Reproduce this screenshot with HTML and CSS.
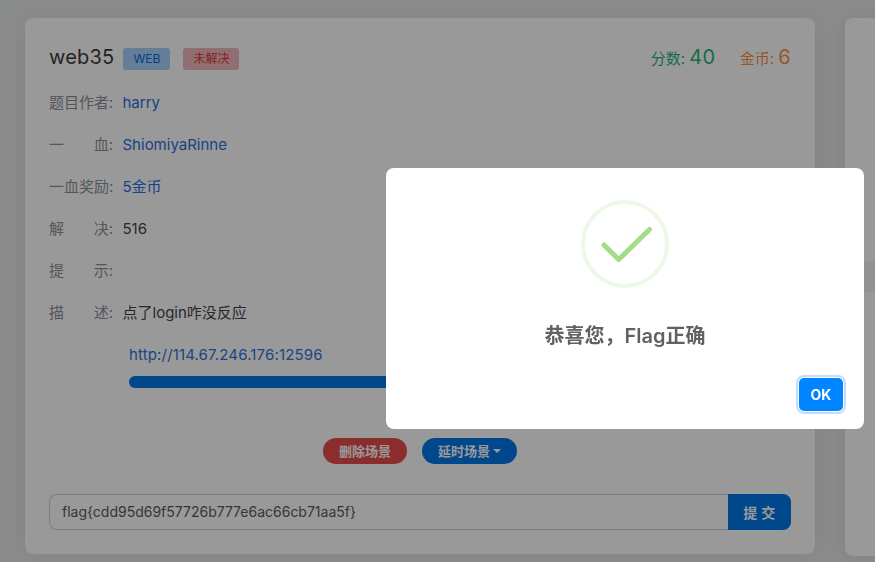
FILE: index.html
```html
<!DOCTYPE html>
<html lang="zh">
<head>
<meta charset="utf-8">
<title>web35</title>
<link rel="stylesheet" href="styles.css">
</head>
<body>
<main class="page">
  <section class="card">
    <header class="head">
      <h1 class="title">web35</h1>
      <span class="tag tag-blue">WEB</span>
      <span class="tag tag-red">未解决</span>
      <div class="stats">
        <span class="stat stat-green">分数: <b>40</b></span>
        <span class="stat stat-orange">金币: <b>6</b></span>
      </div>
    </header>
    <div class="row"><div class="label"><span>题目作者:</span></div><a class="val link">harry</a></div>
    <div class="row"><div class="label"><span>一</span><span>血:</span></div><a class="val link">ShiomiyaRinne</a></div>
    <div class="row"><div class="label"><span>一血奖励:</span></div><a class="val link">5金币</a></div>
    <div class="row"><div class="label"><span>解</span><span>决:</span></div><span class="val">516</span></div>
    <div class="row"><div class="label"><span>提</span><span>示:</span></div><span class="val"></span></div>
    <div class="row"><div class="label"><span>描</span><span>述:</span></div><span class="val">点了login咋没反应</span></div>
    <div class="scene">
      <a class="scene-url">http://114.67.246.176:12596</a>
      <div class="bar"></div>
    </div>
    <div class="actions">
      <button class="pill pill-red">删除场景</button>
      <button class="pill pill-blue">延时场景<i class="caret"></i></button>
    </div>
    <form class="flag">
      <div class="flag-input">flag{cdd95d69f57726b777e6ac66cb71aa5f}</div>
      <button class="flag-btn" type="button">提 交</button>
    </form>
  </section>
  <section class="card card-next"></section>
</main>
<div class="overlay"></div>
<div class="band"></div>
<div class="modal">
  <svg class="check" width="88" height="88" viewBox="0 0 88 88">
    <circle cx="44" cy="44" r="42" fill="none" stroke="#a5dc86" stroke-opacity=".2" stroke-width="4"/>
    <path d="M23 45 L37.700 59.500 L68.500 29.500" fill="none" stroke="#a5dc86" stroke-width="5" stroke-linecap="round" stroke-linejoin="round"/>
  </svg>
  <h2 class="modal-title">恭喜您，Flag正确</h2>
  <div class="modal-foot"><button class="ok">OK</button></div>
</div>
</body>
</html>
```
FILE: styles.css
```css
* { box-sizing: border-box; }
html, body { margin: 0; height: 100%; overflow: hidden; }
body {
  background: #e5e7e6;
  font-family: Inter, "Noto Sans CJK SC", sans-serif;
  font-size: 15px;
  color: #2f3133;
}
.page {
  display: flex;
  gap: 30px;
  padding: 18px 0 0 25px;
  width: 1200px;
  height: 562px;
  align-items: flex-start;
}
.card {
  width: 790px;
  height: 536px;
  flex: none;
  background: #fff;
  border-radius: 8px;
  box-shadow: 0 0 24px rgba(0, 0, 0, .05);
  padding: 26px 24px 0;
}
.card-next { width: 340px; height: 538px; }
.head { display: flex; align-items: flex-start; height: 38px; }
.title { margin: 0; font-size: 20px; letter-spacing: .2px; font-weight: 400; line-height: 26px; color: #3c3c3c; }
.tag {
  height: 22px;
  margin-top: 4px;
  border-radius: 3px;
  font-size: 12px;
  line-height: 22px;
  text-align: center;
}
.tag-blue { width: 47px; margin-left: 9px; background: #a8d0fa; color: #0e6ae0; }
.tag-red { width: 56px; margin-left: 13px; background: #f0b8bc; color: #e03a3a; }
.stats { margin-left: auto; display: flex; gap: 24px; line-height: 26px; font-size: 15px; }
.stat b { font-size: 20px; font-weight: 400; letter-spacing: .4px; }
.stat-green { color: #29b27a; }
.stat-orange { color: #fb9240; }
.row { display: flex; height: 42px; line-height: 42px; }
.label { width: 64px; display: flex; justify-content: space-between; color: #8a9199; flex: none; white-space: nowrap; }
.val { margin-left: 9.500px; color: #3f454b; }
.val.link { color: #2a70e0; }
.scene { padding-left: 80px; margin-top: 10px; }
.scene-url { display: block; line-height: 22px; color: #2f74e0; letter-spacing: .15px; }
.bar { height: 12px; margin-top: 10px; background: #0078e8; border-radius: 6px; width: 640px; }
.actions { display: flex; justify-content: center; gap: 15px; margin-top: 50px; }
.pill {
  height: 26px;
  border: 0;
  border-radius: 13px;
  color: #fff;
  font: 700 13px/26px Inter, "Noto Sans CJK SC", sans-serif;
  padding: 0;
  display: flex;
  align-items: center;
  justify-content: center;
}
.pill-red { width: 84px; background: #e84c4c; }
.pill-blue { width: 95px; background: #0078e8; }
.caret {
  width: 0; height: 0; margin-left: 3px;
  border-left: 4px solid transparent;
  border-right: 4px solid transparent;
  border-top: 4px solid #fff;
}
.flag { display: flex; margin-top: 30px; height: 36px; }
.flag-input {
  flex: 1;
  border: 1px solid #ced4da;
  border-right: 0;
  border-radius: 8px 0 0 8px;
  padding-left: 12px;
  line-height: 34px;
  font-size: 14px;
  color: #555c63;
  background: #fff;
}
.flag-btn {
  width: 63px;
  border: 0;
  border-radius: 0 8px 8px 0;
  background: #0078e8;
  color: #fff;
  font: 700 14px "Noto Sans CJK SC", sans-serif;
  letter-spacing: .5px;
}
.overlay { position: fixed; inset: 0; background: rgba(0, 0, 0, .4); }
.band { position: fixed; left: 864px; top: 262px; width: 11px; height: 30px; background: rgba(0, 0, 0, .05); }
.modal {
  position: fixed;
  left: 386px;
  top: 168px;
  width: 478px;
  height: 261px;
  background: #fff;
  border-radius: 8px;
  display: flex;
  flex-direction: column;
  align-items: center;
  padding-top: 32px;
}
.check { display: block; flex: none; }
.modal-title { margin: 35px 0 0; font-size: 20px; line-height: 26px; font-weight: 600; color: #616161; }
.modal-foot { margin-top: auto; align-self: flex-end; padding: 0 21px 18px 0; }
.ok {
  display: block;
  width: 44px;
  height: 33px;
  border: 0;
  border-radius: 5px;
  background: #0084ff;
  color: #fff;
  font: 700 14px Inter, sans-serif;
  padding: 0;
  box-shadow: 0 0 0 1px #fff, 0 0 0 3px rgba(0, 123, 255, .25);
}
```
